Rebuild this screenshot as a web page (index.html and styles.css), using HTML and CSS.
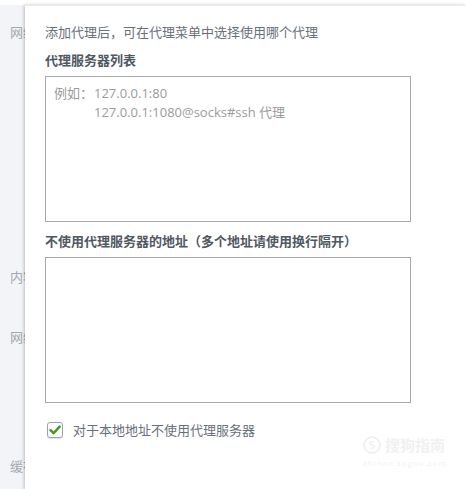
FILE: index.html
```html
<!DOCTYPE html>
<html>
    <head>
        <meta charset="utf-8">
        <link rel="stylesheet" href="styles.css">
    </head>
    <body>
        <div id="topgap"></div>
        <div id="wrap">
            <div id="sidebar">
                <div class="side-item first">网络</div>
                <div class="side-item inner">内容</div>
                <div class="side-item net">网络</div>
                <div class="side-item cache">缓存</div>
            </div>
            <div id="panel">
                <p class="intro">添加代理后，可在代理菜单中选择使用哪个代理</p>
                <h3 class="label">代理服务器列表</h3>
                <div class="field">
                    <div class="hint">
                        <span>例如：</span><span>127.0.0.1:80</span>
                        <span></span><span>127.0.0.1:1080@socks#ssh 代理</span>
                    </div>
                </div>
                <h3 class="label second">不使用代理服务器的地址（多个地址请使用换行隔开）</h3>
                <div class="field"></div>
                <label class="check">
                    <span class="box">
                        <svg width="12" height="10" viewBox="0 0 12 10"><path d="M1.5 5.2 L4.6 8.2 L10.6 1.6" fill="none" stroke="#3d9a1c" stroke-width="2.4" stroke-linecap="round" stroke-linejoin="round"/></svg>
                    </span>
                    <span>对于本地地址不使用代理服务器</span>
                </label>
                <div id="watermark">
                    <div class="wm-top"><span class="wm-logo">S</span>搜狗指南</div>
                    <div class="wm-url">zhinan.sogou.com</div>
                </div>
            </div>
        </div>
    </body>
</html>
```

FILE: styles.css
```css
*{ padding: 0px; margin: 0px; box-sizing: border-box; }

html, body
{
    width: 100%;
    height: 100%;
    overflow: hidden;
    background: white;
    font-family: "Open Sans", "Noto Sans CJK SC", sans-serif;
    font-size: 13px;
}

#topgap
{
    height: 5px;
    background: white;
}

#wrap
{
    display: flex;
    height: 484px;
}

#sidebar
{
    width: 25px;
    flex-shrink: 0;
    background: #f2f4f7;
    overflow: hidden;
    padding-left: 10px;
    color: #a3a8ae;
    white-space: nowrap;
    line-height: 20px;
}
.side-item.first { margin-top: 17px; }
.side-item.inner { margin-top: 225px; }
.side-item.net { margin-top: 40px; }
.side-item.cache { margin-top: 109px; }

#panel
{
    position: relative;
    flex: 1;
    background: white;
    border-top: 1px solid #ececec;
    box-shadow: -1px 0 3px rgba(0,0,0,.22);
    padding: 16px 0 0 20px;
}

.intro
{
    line-height: 20px;
    color: #68707a;
}

.label
{
    margin-top: 8px;
    line-height: 20px;
    font-size: 13px;
    font-weight: bold;
    color: #505862;
}
.label.second { margin-top: 9px; }

.field
{
    margin-top: 6px;
    width: 366px;
    height: 146px;
    border: 1px solid #a9a9a9;
    background: white;
}

.hint
{
    display: grid;
    grid-template-columns: 40px auto;
    padding: 7px 0 0 8px;
    line-height: 19px;
    color: #9b9b9b;
}

.check
{
    display: flex;
    align-items: center;
    margin-top: 17px;
    margin-left: 2px;
    color: #68707a;
    line-height: 20px;
}

.check .box
{
    display: flex;
    align-items: center;
    justify-content: center;
    width: 16px;
    height: 16px;
    margin-right: 10px;
    border: 1px solid #9fa3a8;
    border-radius: 3px;
    background: white;
    box-shadow: 0 1px 1px rgba(0,0,0,.12);
}

#watermark
{
    position: absolute;
    left: 338px;
    top: 428px;
    color: #f1f1f1;
    text-align: center;
}
.wm-top
{
    display: flex;
    align-items: center;
    font-size: 15px;
    font-weight: bold;
}
.wm-logo
{
    display: inline-block;
    width: 18px;
    height: 18px;
    margin-right: 4px;
    border: 2px solid #f0f0f0;
    border-radius: 50%;
    font-size: 11px;
    line-height: 14px;
}
.wm-url
{
    font-size: 8px;
    margin-top: 2px;
    letter-spacing: 1px;
}
```
